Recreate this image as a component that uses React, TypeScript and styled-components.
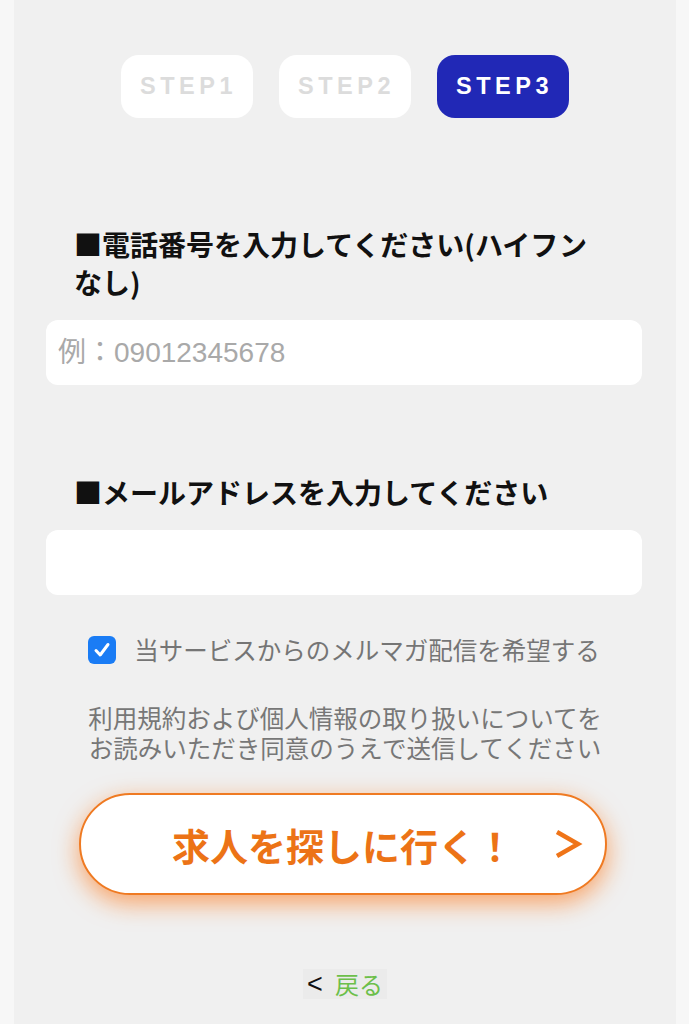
import React, { useState } from "react";
import styled, { createGlobalStyle } from "styled-components";

const GlobalStyle = createGlobalStyle`
  html, body {
    margin: 0;
    padding: 0;
    background: #f7f7f7;
  }
  body {
    font-family: "Noto Sans CJK JP", "Noto Sans", sans-serif;
  }
`;

const steps = ["STEP1", "STEP2", "STEP3"];

export default function App() {
  const [tel, setTel] = useState("");
  const [mail, setMail] = useState("");
  const [subscribe, setSubscribe] = useState(true);

  return (
    <>
      <GlobalStyle />
      <Page>
        <StepBar>
          {steps.map((s, i) => (
            <Step key={s} $active={i === steps.length - 1}>{s}</Step>
          ))}
        </StepBar>

        <Form>
          <Heading>■電話番号を入力してください(ハイフンなし)</Heading>
          <Input
            type="tel"
            placeholder="例：09012345678"
            value={tel}
            onChange={(e) => setTel(e.target.value)}
          />

          <Heading $spaced>■メールアドレスを入力してください</Heading>
          <Input
            type="email"
            value={mail}
            onChange={(e) => setMail(e.target.value)}
          />

          <CheckRow>
            <CheckBox type="button" onClick={() => setSubscribe(!subscribe)} $checked={subscribe}>
              {subscribe && (
                <svg width="20" height="20" viewBox="0 0 20 20">
                  <path d="M4 10.5 L8.2 15 L16 4.5" fill="none" stroke="#fff" strokeWidth="3" strokeLinecap="round" strokeLinejoin="round" />
                </svg>
              )}
            </CheckBox>
            <CheckLabel>当サービスからのメルマガ配信を希望する</CheckLabel>
          </CheckRow>

          <Notice>
            利用規約および個人情報の取り扱いについてを
            <br />
            お読みいただき同意のうえで送信してください
          </Notice>
        </Form>

        <SubmitButton type="button">
          求人を探しに行く！
          <Chevron width="30" height="32" viewBox="0 0 30 32">
            <path d="M4 4 L25 16 L4 28" fill="none" stroke="#ef7418" strokeWidth="4.5" strokeLinejoin="miter" />
          </Chevron>
        </SubmitButton>

        <BackRow>
          <BackLink href="#">
            <Arrow>&lt;</Arrow>
            <Green>戻る</Green>
          </BackLink>
        </BackRow>
      </Page>
    </>
  );
}

const Page = styled.main`
  margin-left: 14px;
  width: 662px;
  min-height: 1024px;
  background: #f0f0f0;
  padding-top: 55px;
  box-sizing: border-box;
  display: flex;
  flex-direction: column;
`;

const StepBar = styled.div`
  display: flex;
  justify-content: center;
  gap: 26px;
  padding-right: 1px;
`;

const Step = styled.div<{ $active?: boolean }>`
  width: 132px;
  height: 63px;
  border-radius: 18px;
  display: flex;
  align-items: center;
  justify-content: center;
  font-family: "Liberation Sans", Arial, sans-serif;
  font-weight: 700;
  font-size: 23.5px;
  letter-spacing: 4.5px;
  padding-left: 4px;
  box-sizing: border-box;
  background: ${(p) => (p.$active ? "#2128b6" : "#ffffff")};
  color: ${(p) => (p.$active ? "#ffffff" : "#dcdcdc")};
`;

const Form = styled.div`
  padding: 107px 34px 0 32px;
  display: flex;
  flex-direction: column;
`;

const Heading = styled.h2<{ $spaced?: boolean }>`
  margin: ${(p) => (p.$spaced ? "88px" : "0")} 0 19px 28px;
  max-width: 532px;
  font-size: 28px;
  line-height: 38px;
  font-weight: 700;
  color: #111;
`;

const Input = styled.input`
  height: 65px;
  width: 100%;
  box-sizing: border-box;
  border: none;
  border-radius: 12px;
  background: #fff;
  padding: 0 12px;
  font-family: "Liberation Sans", "Noto Sans CJK JP", sans-serif;
  font-size: 28px;
  color: #333;
  outline: none;
  &::placeholder {
    color: #a9a9a9;
  }
`;

const CheckRow = styled.label`
  margin-top: 40px;
  display: flex;
  align-items: center;
  justify-content: center;
  gap: 18px;
`;

const CheckBox = styled.button<{ $checked?: boolean }>`
  width: 28px;
  height: 28px;
  padding: 0;
  border-radius: 6px;
  border: ${(p) => (p.$checked ? "none" : "2px solid #999")};
  background: ${(p) => (p.$checked ? "#1a7cf5" : "#fff")};
  display: flex;
  align-items: center;
  justify-content: center;
  cursor: pointer;
`;

const CheckLabel = styled.span`
  font-size: 24.5px;
  color: #757575;
  line-height: 30px;
`;

const Notice = styled.p`
  margin: 38px 0 0;
  text-align: center;
  font-size: 24.5px;
  line-height: 30px;
  color: #777;
  padding-left: 2px;
`;

const SubmitButton = styled.button`
  position: relative;
  align-self: center;
  margin: 30px 0 0 -4px;
  width: 528px;
  height: 102px;
  border-radius: 51px;
  border: 2px solid #ef7a22;
  background: #fff;
  box-shadow: 0 8px 24px rgba(255, 112, 10, 0.6);
  font-family: "Noto Sans CJK JP", sans-serif;
  font-size: 38px;
  font-weight: 700;
  color: #ec7316;
  padding: 0;
  cursor: pointer;
`;

const Chevron = styled.svg`
  position: absolute;
  right: 22px;
  top: 50%;
  transform: translateY(-50%);
`;

const BackRow = styled.div`
  display: flex;
  justify-content: center;
  margin-top: 74px;
`;

const BackLink = styled.a`
  display: inline-flex;
  align-items: center;
  gap: 12px;
  padding: 0 4px;
  background: #ebebeb;
  text-decoration: none;
  font-size: 24px;
  line-height: 30px;
`;

const Arrow = styled.span`
  font-family: "Liberation Sans", Arial, sans-serif;
  font-size: 27px;
  color: #111;
`;

const Green = styled.span`
  color: #6cbf4a;
`;
